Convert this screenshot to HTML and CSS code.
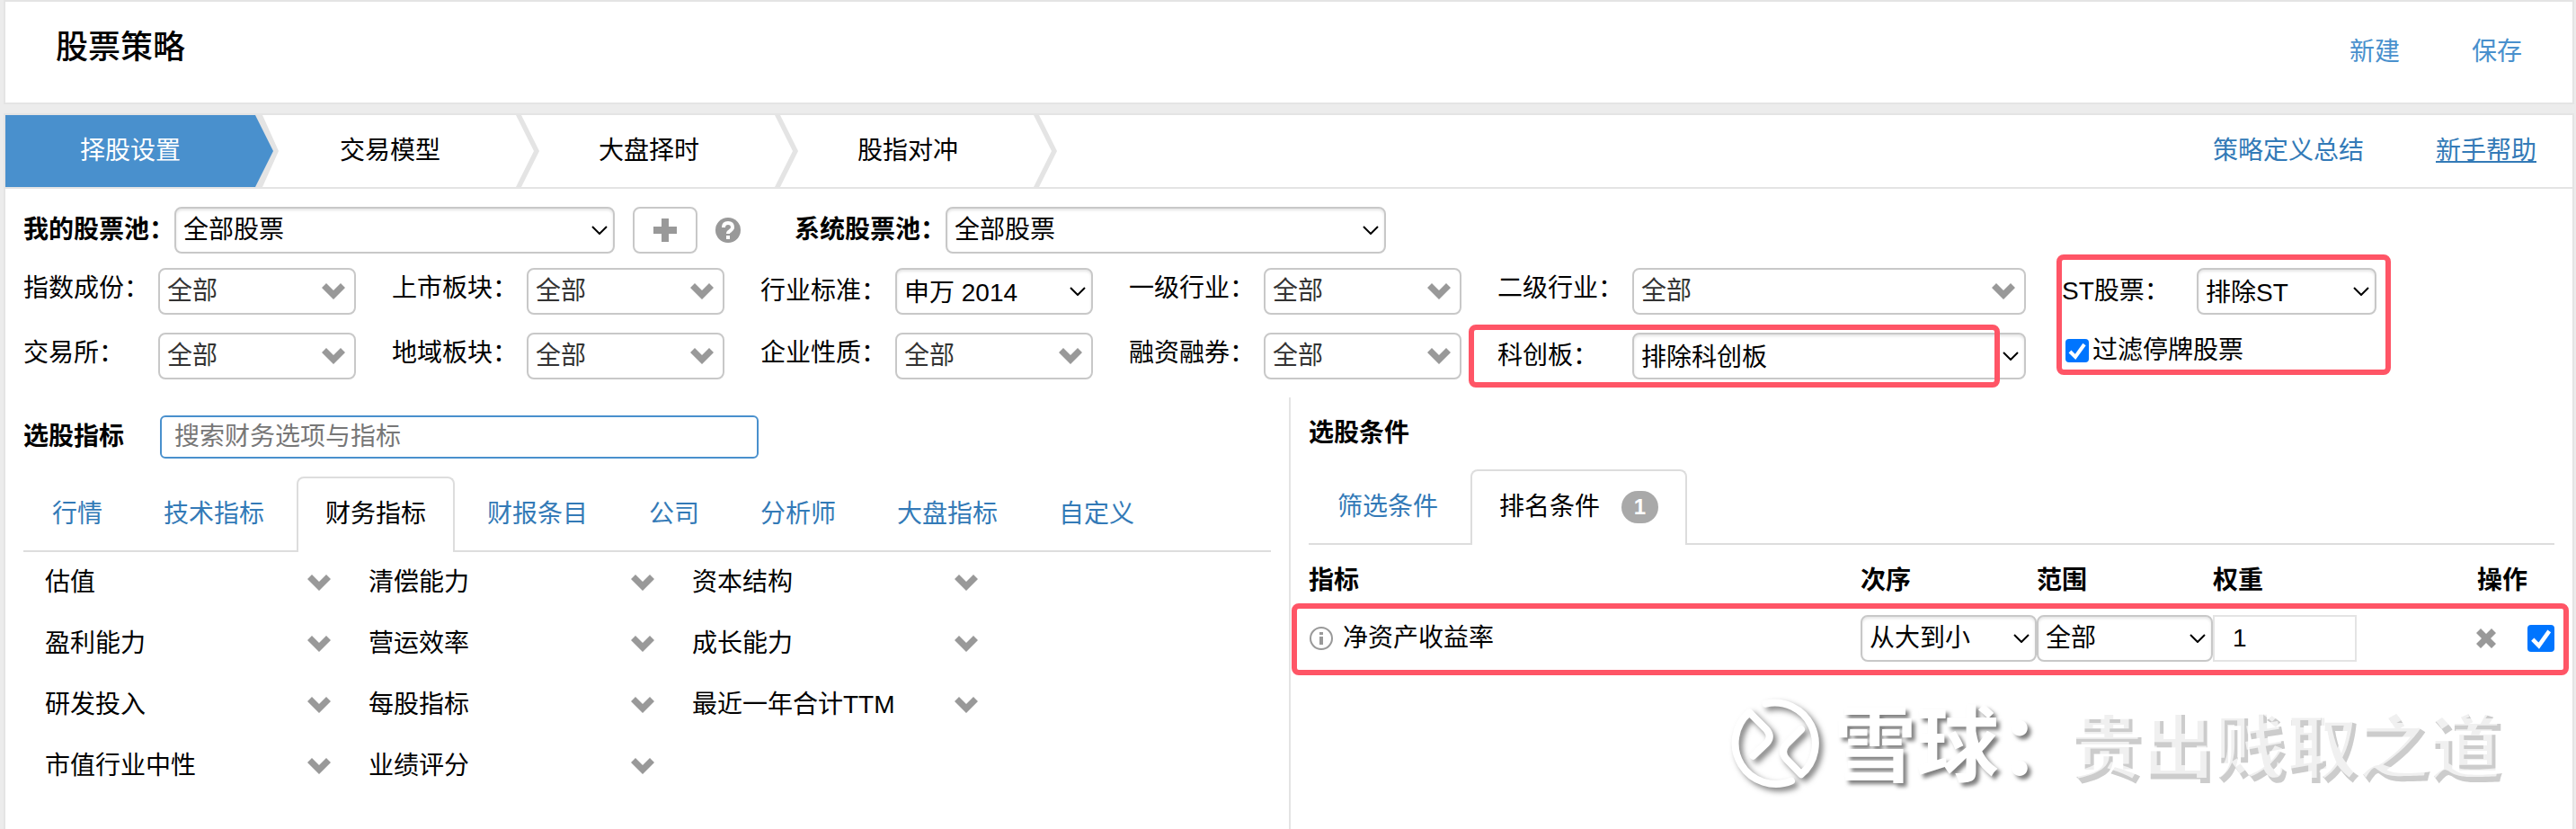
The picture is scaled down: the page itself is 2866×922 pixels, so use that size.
FILE: index.html
```html
<!DOCTYPE html>
<html lang="zh-CN">
<head>
	<meta charset="UTF-8">
	<title>股票策略</title>
	<link rel="stylesheet" href="styles.css">
</head>
<body>
	<!-- 公用图标 -->
	<svg class="sprite" aria-hidden="true">
		<symbol id="chevron" viewBox="0 0 26 18">
			<path d="M0 5 L5 0 L13 8 L21 0 L26 5 L13 18 Z"/>
		</symbol>
		<symbol id="step" viewBox="0 0 28 80" preserveAspectRatio="none">
			<path d="M0 0 H6 L26 40 L6 80 H0 L20 40 Z"/>
		</symbol>
	</svg>

	<div class="header panel">
		<h1 class="title">股票策略</h1>
		<div class="actions">
			<a href="#">新建</a>
			<a href="#">保存</a>
		</div>
	</div>

	<div class="main panel">
		<div class="steps">
			<ul class="stepList">
				<li class="active">
					<a href="#">择股设置</a>
					<svg class="arrow" viewBox="0 0 28 80"><path class="edge" d="M0 0 H8 L26 40 L8 80 H0 Z"/><path class="fill" d="M0 0 L20 40 L0 80 Z"/></svg>
				</li>
				<li><a href="#">交易模型</a><svg class="arrow"><use href="#step"/></svg></li>
				<li><a href="#">大盘择时</a><svg class="arrow"><use href="#step"/></svg></li>
				<li><a href="#">股指对冲</a><svg class="arrow"><use href="#step"/></svg></li>
			</ul>
			<div class="help">
				<a href="#">策略定义总结</a>
				<a href="#" class="underline">新手帮助</a>
			</div>
		</div>

		<div class="pools">
			<label for="myPool">我的股票池：</label>
			<select id="myPool" class="select poolSelect"><option>全部股票</option></select>
			<button type="button" class="add" aria-label="新增股票池">
				<svg width="26" height="26" viewBox="0 0 26 26"><path d="M9 0h8v9h9v8h-9v9H9v-9H0V9h9z"/></svg>
			</button>
			<svg class="question" width="28" height="28" viewBox="0 0 28 28">
				<circle cx="14" cy="14" r="14"/>
				<path class="mark" d="M9 11 Q9 6 14 6 Q19 6 19 11 Q19 13 16 15 Q14 16 14 18"/>
				<rect class="dot" x="12" y="20" width="4" height="4"/>
			</svg>
			<label for="sysPool">系统股票池：</label>
			<select id="sysPool" class="select poolSelect"><option>全部股票</option></select>
		</div>

		<div class="filters">
			<div class="field">
				<label for="f1">指数成份：</label>
				<button type="button" id="f1" class="multi">全部<svg><use href="#chevron"/></svg></button>
			</div>
			<div class="field">
				<label for="f2">上市板块：</label>
				<button type="button" id="f2" class="multi">全部<svg><use href="#chevron"/></svg></button>
			</div>
			<div class="field low">
				<label for="f3">行业标准：</label>
				<select id="f3" class="select"><option>申万 2014</option></select>
			</div>
			<div class="field">
				<label for="f4">一级行业：</label>
				<button type="button" id="f4" class="multi">全部<svg><use href="#chevron"/></svg></button>
			</div>
			<div class="field">
				<label for="f5">二级行业：</label>
				<button type="button" id="f5" class="multi">全部<svg><use href="#chevron"/></svg></button>
			</div>
			<div class="field low st">
				<label for="f6">ST股票：</label>
				<select id="f6" class="select"><option>排除ST</option></select>
				<span class="redBox redSt"></span>
			</div>
			<div class="field">
				<label for="f7">交易所：</label>
				<button type="button" id="f7" class="multi">全部<svg><use href="#chevron"/></svg></button>
			</div>
			<div class="field">
				<label for="f8">地域板块：</label>
				<button type="button" id="f8" class="multi">全部<svg><use href="#chevron"/></svg></button>
			</div>
			<div class="field">
				<label for="f9">企业性质：</label>
				<button type="button" id="f9" class="multi">全部<svg><use href="#chevron"/></svg></button>
			</div>
			<div class="field">
				<label for="f10">融资融券：</label>
				<button type="button" id="f10" class="multi">全部<svg><use href="#chevron"/></svg></button>
			</div>
			<div class="field low">
				<label for="f11">科创板：</label>
				<select id="f11" class="select"><option>排除科创板</option></select>
				<span class="redBox redStar"></span>
			</div>
			<div class="field">
				<label class="checkLine"><input type="checkbox" class="check" checked>过滤停牌股票</label>
			</div>
		</div>

		<div class="content">
			<div class="left">
				<div class="search">
					<label for="search">选股指标</label>
					<input type="text" id="search" placeholder="搜索财务选项与指标">
				</div>
				<ul class="tabs">
					<li><a href="#">行情</a></li>
					<li><a href="#">技术指标</a></li>
					<li class="active"><a href="#">财务指标</a></li>
					<li><a href="#">财报条目</a></li>
					<li><a href="#">公司</a></li>
					<li><a href="#">分析师</a></li>
					<li><a href="#">大盘指标</a></li>
					<li><a href="#">自定义</a></li>
				</ul>
				<ul class="items">
					<li>估值<svg><use href="#chevron"/></svg></li>
					<li>清偿能力<svg><use href="#chevron"/></svg></li>
					<li>资本结构<svg><use href="#chevron"/></svg></li>
					<li>盈利能力<svg><use href="#chevron"/></svg></li>
					<li>营运效率<svg><use href="#chevron"/></svg></li>
					<li>成长能力<svg><use href="#chevron"/></svg></li>
					<li>研发投入<svg><use href="#chevron"/></svg></li>
					<li>每股指标<svg><use href="#chevron"/></svg></li>
					<li>最近一年合计TTM<svg><use href="#chevron"/></svg></li>
					<li>市值行业中性<svg><use href="#chevron"/></svg></li>
					<li>业绩评分<svg><use href="#chevron"/></svg></li>
				</ul>
			</div>

			<div class="right">
				<h2>选股条件</h2>
				<ul class="tabs">
					<li><a href="#">筛选条件</a></li>
					<li class="active"><a href="#">排名条件<span class="badge">1</span></a></li>
				</ul>
				<div class="rank">
					<table>
						<thead>
							<tr>
								<th>指标</th>
								<th class="col">次序</th>
								<th class="col">范围</th>
								<th class="col">权重</th>
								<th class="ops">操作</th>
							</tr>
						</thead>
						<tbody>
							<tr>
								<td>
									<div class="name">
										<svg width="28" height="28" viewBox="0 0 28 28"><circle cx="14" cy="14" r="12"/><path d="M14 7v3M14 12v9"/></svg>
										净资产收益率
									</div>
								</td>
								<td><select class="select" aria-label="次序"><option>从大到小</option></select></td>
								<td><select class="select" aria-label="范围"><option>全部</option></select></td>
								<td><input type="text" class="weight" aria-label="权重" value="1"></td>
								<td>
									<div class="opsCell">
										<button type="button" class="del" aria-label="删除">
											<svg width="24" height="24" viewBox="0 0 24 24"><path d="M6 1 L12 7 L18 1 L23 6 L17 12 L23 18 L18 23 L12 17 L6 23 L1 18 L7 12 L1 6 Z"/></svg>
										</button>
										<input type="checkbox" class="check big" aria-label="启用" checked>
									</div>
								</td>
							</tr>
						</tbody>
					</table>
					<span class="redBox redRank"></span>
				</div>

				<div class="watermark">
					<svg width="130" height="120" viewBox="0 0 390 360">
						<path d="M225 296 A136 136 0 0 1 85 67 L142 124 Q162 148 142 170 L98 212"/>
						<path d="M140 38 A136 136 0 0 1 258 274 L208 222 Q188 198 208 174 L258 124"/>
					</svg>
					<span class="brand">雪球：</span>
					<span class="author">贵出贱取之道</span>
				</div>
			</div>
		</div>
	</div>
</body>
</html>
```

FILE: styles.css
```css
*{
	box-sizing: border-box;
}
html,body{
	height: 100%;
}
body{
	margin: 0;
	padding: 0 2px 0 4px;
	display: flex;
	flex-direction: column;
	gap: 10px;
	background: #ececec;
	color: #000;
	font: 28px/40px "Liberation Sans","Noto Sans CJK SC",sans-serif;
}
ul{
	margin: 0;
	padding: 0;
	list-style: none;
}
a{
	color: #337ab7;
	text-decoration: none;
}
input,select,button{
	margin: 0;
	font: inherit;
	color: inherit;
}
.sprite{
	position: absolute;
	width: 0;
	height: 0;
}
.panel{
	background: #fff;
	border: 2px solid #e4e4e4;
}

/* 顶部 */
.header{
	display: flex;
	justify-content: space-between;
	padding: 26px 56px 36px;
}
.title{
	margin: 0;
	font-size: 36px;
	line-height: 50px;
	font-weight: 500;
}
.actions{
	display: flex;
	gap: 80px;
	padding-top: 10px;
}
.actions a{
	color: #4990cd;
}

.main{
	flex: 1;
	display: flex;
	flex-direction: column;
	border-bottom: 0;
}

/* 步骤条 */
.steps{
	display: flex;
	justify-content: space-between;
	align-items: center;
	border-bottom: 2px solid #e4e4e4;
}
.stepList{
	display: flex;
}
.stepList li{
	display: flex;
	width: 288px;
	height: 80px;
}
.stepList a{
	flex: 1;
	line-height: 80px;
	text-align: center;
	color: #000;
}
.stepList .arrow{
	width: 28px;
	height: 80px;
	margin-right: -20px;
	fill: #e4e4e4;
}
.stepList .active a{
	background: #4990cd;
	color: #fff;
}
.stepList .active .arrow{
	margin-right: -18px;
}
.arrow .fill{
	fill: #4990cd;
}
.help{
	display: flex;
	gap: 80px;
	padding-right: 40px;
}
.underline{
	text-decoration: underline;
}

/* 下拉框 */
.select,.multi{
	min-width: 0;
	height: 52px;
	border: 2px solid #c8c8c8;
	border-radius: 8px;
	background: #fff;
}
.select{
	appearance: none;
	padding: 0 32px 0 8px;
	background: #fff url("data:image/svg+xml,%3Csvg xmlns='http://www.w3.org/2000/svg' width='18' height='10'%3E%3Cpath d='M1 1L9 9L17 1' fill='none' stroke='%23000' stroke-width='2'/%3E%3C/svg%3E") no-repeat right 6px center;
	box-shadow: inset 0 2px 3px rgba(0,0,0,.1);
}
.multi{
	display: flex;
	justify-content: space-between;
	align-items: center;
	padding: 0 10px 0 8px;
	color: #333;
}
.multi svg,.items svg{
	width: 26px;
	height: 18px;
	fill: #999;
}

/* 股票池 */
.pools{
	display: flex;
	align-items: center;
	padding: 20px 20px 0;
}
.pools label{
	width: 168px;
	font-weight: bold;
	white-space: nowrap;
}
.poolSelect{
	width: 490px;
}
.add{
	display: flex;
	align-items: center;
	justify-content: center;
	width: 72px;
	height: 52px;
	margin: 0 20px;
	border: 2px solid #c8c8c8;
	border-radius: 8px;
	background: #fff;
	fill: #999;
}
.question{
	margin-right: 60px;
	fill: #999;
}
.question .mark{
	fill: none;
	stroke: #fff;
	stroke-width: 4;
}
.question .dot{
	fill: #fff;
}

/* 筛选项 */
.filters{
	display: grid;
	grid-template-columns: 410fr 410fr 410fr 410fr 628fr 548fr;
	row-gap: 20px;
	padding: 16px 20px 0;
}
.field{
	position: relative;
	display: flex;
	padding-right: 40px;
	line-height: 46px;
}
.field label{
	width: 150px;
	white-space: nowrap;
}
.field.low{
	line-height: 52px;
}
.field .select,.field .multi{
	flex: 1;
}
.field.st .select{
	flex: none;
	width: 200px;
}
.field .checkLine{
	display: flex;
	align-items: center;
	gap: 4px;
	height: 40px;
	padding-left: 4px;
	width: auto;
}
.check{
	appearance: none;
	width: 26px;
	height: 26px;
	border-radius: 4px;
	background: #fff;
	border: 2px solid #c8c8c8;
}
.check:checked{
	border: 0;
	background: #0075ff url("data:image/svg+xml,%3Csvg xmlns='http://www.w3.org/2000/svg' viewBox='0 0 26 26'%3E%3Cpath d='M5 14L11 20L21 6' fill='none' stroke='%23fff' stroke-width='4'/%3E%3C/svg%3E") center/100% no-repeat;
}
.check.big{
	width: 30px;
	height: 30px;
}

/* 红色标记框 */
.redBox{
	position: absolute;
	border: 6px solid #ff5566;
	border-radius: 8px;
	pointer-events: none;
}
.redSt{
	left: -6px;
	top: -15px;
	width: 372px;
	height: 134px;
}
.redStar{
	left: -32px;
	right: 69px;
	top: -9px;
	height: 70px;
}
.redRank{
	left: -19px;
	right: -16px;
	bottom: 3px;
	height: 80px;
}

/* 内容区 */
.content{
	flex: 1;
	display: grid;
	grid-template-columns: 1fr 1fr;
	padding-top: 20px;
}
.left{
	padding: 20px 20px 0;
}
.right{
	position: relative;
	padding: 0 20px;
	border-left: 2px solid #e4e4e4;
}
.right h2{
	margin: 0;
	font-size: 28px;
	line-height: 80px;
}
.search{
	display: flex;
	align-items: center;
	margin-bottom: 20px;
}
.search label{
	width: 152px;
	font-weight: bold;
}
.search input{
	width: 666px;
	height: 48px;
	padding: 0 14px;
	border: 2px solid #4990cd;
	border-radius: 6px;
	outline: none;
}
.search input::placeholder{
	color: #777;
}
.tabs{
	display: flex;
	gap: 4px;
	border-bottom: 2px solid #ddd;
}
.tabs li{
	height: 84px;
	margin-bottom: -2px;
	padding: 0 30px;
	border: 2px solid transparent;
	border-bottom: 0;
	line-height: 80px;
}
.tabs .active{
	border-color: #ddd;
	border-radius: 8px 8px 0 0;
	background: #fff;
}
.tabs .active a{
	display: flex;
	align-items: center;
	color: #000;
}
.badge{
	width: 41px;
	margin-left: 24px;
	border-radius: 18px;
	background: #a9a9a9;
	color: #fff;
	font-size: 24px;
	line-height: 36px;
	font-weight: bold;
	text-align: center;
}
.items{
	display: grid;
	grid-template-columns: repeat(3,318px);
	column-gap: 42px;
	padding-left: 24px;
}
.items li{
	display: flex;
	justify-content: space-between;
	align-items: center;
	height: 68px;
}

/* 排名条件 */
.rank{
	position: relative;
}
.rank table{
	width: 100%;
	table-layout: fixed;
	border-collapse: collapse;
}
.rank th{
	height: 60px;
	padding: 20px 0 0;
	text-align: left;
	font-weight: bold;
}
.rank td{
	height: 88px;
	padding: 0;
}
.rank .col{
	width: 196px;
}
.rank .ops{
	width: 184px;
	padding-left: 98px;
}
.rank td .select{
	display: block;
	width: 196px;
}
.weight{
	display: block;
	width: 160px;
	height: 52px;
	padding: 0 20px;
	border: 2px solid #e4e4e4;
}
.name{
	display: flex;
	align-items: center;
	gap: 10px;
}
.name svg{
	fill: none;
	stroke: #999;
	stroke-width: 2;
}
.name path{
	stroke-width: 4;
}
.opsCell{
	display: flex;
	justify-content: flex-end;
	align-items: center;
	gap: 34px;
}
.del{
	display: flex;
	padding: 0;
	border: 0;
	background: none;
	fill: #999;
}

/* 水印 */
.watermark{
	position: absolute;
	right: 80px;
	top: 328px;
	display: flex;
	align-items: center;
	height: 120px;
	white-space: nowrap;
	color: #fff;
}
.watermark svg{
	fill: none;
	stroke: #fff;
	stroke-width: 24;
	stroke-linecap: round;
	stroke-linejoin: round;
	filter: drop-shadow(4px 4px 3px rgba(0,0,0,.5));
}
.brand{
	width: 262px;
	margin-left: -8px;
	font-size: 92px;
	line-height: 120px;
	font-weight: bold;
	text-shadow: 4px 4px 4px rgba(0,0,0,.5);
}
.author{
	color: rgba(255,255,255,.7);
	font-size: 80px;
	line-height: 120px;
	font-weight: bold;
	text-shadow: 4px 6px 0 #ccc;
}
```
